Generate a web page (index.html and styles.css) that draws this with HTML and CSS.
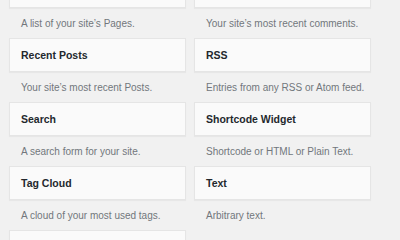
FILE: index.html
```html
<!DOCTYPE html>
<html lang="en">
<head>
    <meta charset="UTF-8">
    <title>Available Widgets</title>
    <link rel="stylesheet" href="styles.css">
</head>
<body>

    <div class="widget-list">
        <div class="widget">
            <div class="widget-top"></div>
            <p class="widget-desc">A list of your site’s Pages.</p>
        </div>
        <div class="widget">
            <div class="widget-top"></div>
            <p class="widget-desc">Your site’s most recent comments.</p>
        </div>
        <div class="widget">
            <div class="widget-top"><h3 class="widget-title">Recent Posts</h3></div>
            <p class="widget-desc">Your site’s most recent Posts.</p>
        </div>
        <div class="widget">
            <div class="widget-top"><h3 class="widget-title">RSS</h3></div>
            <p class="widget-desc">Entries from any RSS or Atom feed.</p>
        </div>
        <div class="widget">
            <div class="widget-top"><h3 class="widget-title">Search</h3></div>
            <p class="widget-desc">A search form for your site.</p>
        </div>
        <div class="widget">
            <div class="widget-top"><h3 class="widget-title">Shortcode Widget</h3></div>
            <p class="widget-desc">Shortcode or HTML or Plain Text.</p>
        </div>
        <div class="widget">
            <div class="widget-top"><h3 class="widget-title">Tag Cloud</h3></div>
            <p class="widget-desc">A cloud of your most used tags.</p>
        </div>
        <div class="widget">
            <div class="widget-top"><h3 class="widget-title">Text</h3></div>
            <p class="widget-desc">Arbitrary text.</p>
        </div>
        <div class="widget">
            <div class="widget-top"></div>
        </div>
    </div>

</body>
</html>
```

FILE: styles.css
```css
/* Reset */
* {
    margin: 0;
    padding: 0;
    box-sizing: border-box;
}

body, html {
    height: 100vh;
    font-family: "Liberation Sans", Arial, sans-serif;
    background: #f1f1f1;
    color: #23282d;
    overflow: hidden;
}

/* Two column list of widgets */
.widget-list {
    display: grid;
    grid-template-columns: 177px 177px;
    column-gap: 8px;
    margin-top: -26px;
    padding-left: 9px;
}

.widget {
    height: 64px;
}

.widget-top {
    height: 34px;
    display: flex;
    align-items: center;
    padding: 0 11px;
    background: #fafafa;
    border: 1px solid #e5e5e5;
    box-shadow: 0 1px 1px rgba(0, 0, 0, 0.04);
}

.widget-title {
    font-size: 10.5px;
    font-weight: bold;
    color: #23282d;
}

.widget-desc {
    padding: 9px 0 0 12px;
    font-size: 10px;
    line-height: 14px;
    color: #72777c;
    white-space: nowrap;
}
```
